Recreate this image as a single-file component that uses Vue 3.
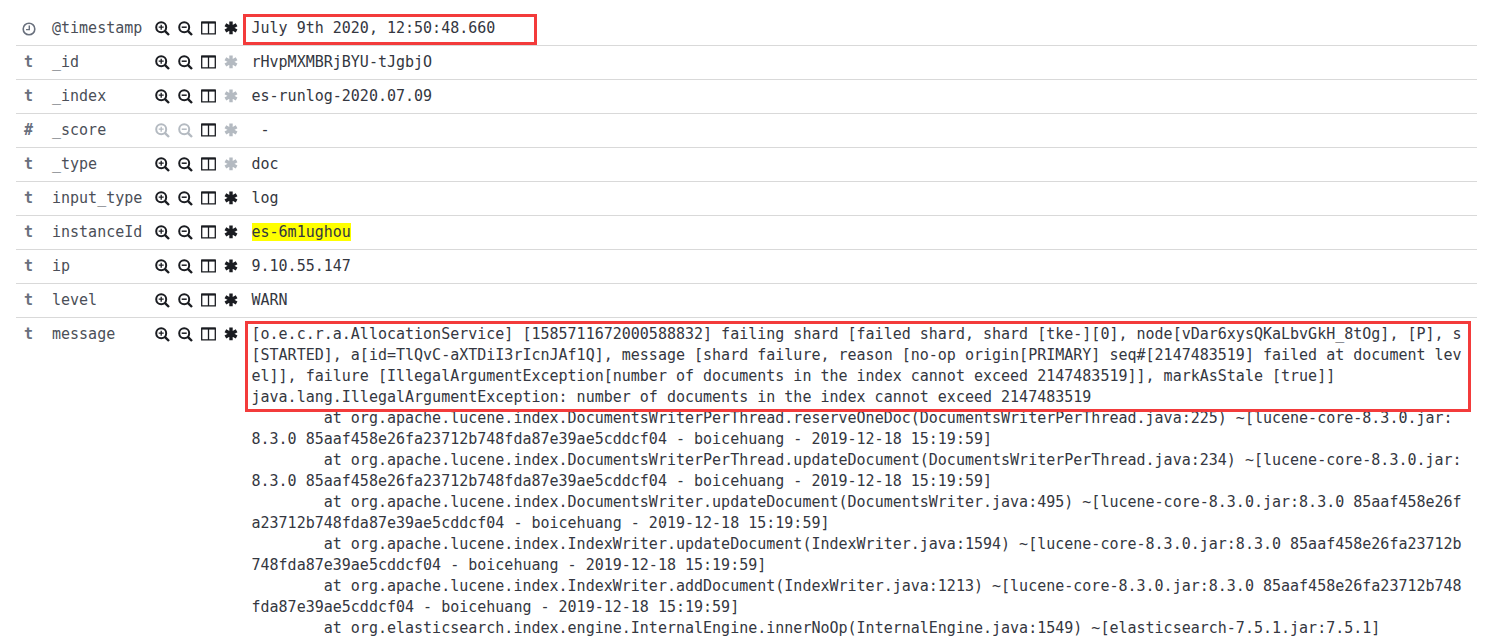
<script setup>
const rows = [
  { type: 'clock', name: '@timestamp', value: 'July 9th 2020, 12:50:48.660', star: true },
  { type: 't', name: '_id', value: 'rHvpMXMBRjBYU-tJgbjO' },
  { type: 't', name: '_index', value: 'es-runlog-2020.07.09' },
  { type: '#', name: '_score', value: ' -', noFilter: true },
  { type: 't', name: '_type', value: 'doc' },
  { type: 't', name: 'input_type', value: 'log', star: true },
  { type: 't', name: 'instanceId', mark: 'es-6m1ughou', star: true },
  { type: 't', name: 'ip', value: '9.10.55.147', star: true },
  { type: 't', name: 'level', value: 'WARN', star: true },
]
const message = `[o.e.c.r.a.AllocationService] [1585711672000588832] failing shard [failed shard, shard [tke-][0], node[vDar6xysQKaLbvGkH_8tOg], [P], s[STARTED], a[id=TlQvC-aXTDiI3rIcnJAf1Q], message [shard failure, reason [no-op origin[PRIMARY] seq#[2147483519] failed at document level]], failure [IllegalArgumentException[number of documents in the index cannot exceed 2147483519]], markAsStale [true]]
java.lang.IllegalArgumentException: number of documents in the index cannot exceed 2147483519
\tat org.apache.lucene.index.DocumentsWriterPerThread.reserveOneDoc(DocumentsWriterPerThread.java:225) ~[lucene-core-8.3.0.jar:8.3.0 85aaf458e26fa23712b748fda87e39ae5cddcf04 - boicehuang - 2019-12-18 15:19:59]
\tat org.apache.lucene.index.DocumentsWriterPerThread.updateDocument(DocumentsWriterPerThread.java:234) ~[lucene-core-8.3.0.jar:8.3.0 85aaf458e26fa23712b748fda87e39ae5cddcf04 - boicehuang - 2019-12-18 15:19:59]
\tat org.apache.lucene.index.DocumentsWriter.updateDocument(DocumentsWriter.java:495) ~[lucene-core-8.3.0.jar:8.3.0 85aaf458e26fa23712b748fda87e39ae5cddcf04 - boicehuang - 2019-12-18 15:19:59]
\tat org.apache.lucene.index.IndexWriter.updateDocument(IndexWriter.java:1594) ~[lucene-core-8.3.0.jar:8.3.0 85aaf458e26fa23712b748fda87e39ae5cddcf04 - boicehuang - 2019-12-18 15:19:59]
\tat org.apache.lucene.index.IndexWriter.addDocument(IndexWriter.java:1213) ~[lucene-core-8.3.0.jar:8.3.0 85aaf458e26fa23712b748fda87e39ae5cddcf04 - boicehuang - 2019-12-18 15:19:59]
\tat org.elasticsearch.index.engine.InternalEngine.innerNoOp(InternalEngine.java:1549) ~[elasticsearch-7.5.1.jar:7.5.1]`
</script>

<template>
  <div class="page">
    <div class="table">
      <div v-for="r in [...rows, { type: 't', name: 'message', message, star: true }]" :key="r.name" class="row" :class="{ last: r.message }">
        <div class="type">
          <svg v-if="r.type === 'clock'" width="14" height="14" viewBox="0 0 14 14" class="clock">
            <circle cx="7" cy="7" r="5.8" fill="none" stroke="#69707d" stroke-width="1.6" />
            <path d="M7.3 3.4V7.6H4" fill="none" stroke="#69707d" stroke-width="1.4" />
          </svg>
          <span v-else>{{ r.type }}</span>
        </div>
        <div class="name">{{ r.name }}</div>
        <div class="actions">
          <svg class="ic" :class="{ off: r.noFilter }" width="15" height="15" viewBox="0 0 15 15">
            <circle cx="6.2" cy="6.2" r="5" fill="none" stroke="currentColor" stroke-width="2" />
            <path d="M9.8 9.8l4.2 4.2" stroke="currentColor" stroke-width="2.4" />
            <path d="M3.7 6.2h5M6.2 3.7v5" stroke="currentColor" stroke-width="1.3" />
          </svg>
          <svg class="ic" :class="{ off: r.noFilter }" width="15" height="15" viewBox="0 0 15 15">
            <circle cx="6.2" cy="6.2" r="5" fill="none" stroke="currentColor" stroke-width="2" />
            <path d="M9.8 9.8l4.2 4.2" stroke="currentColor" stroke-width="2.4" />
            <path d="M3.7 6.2h5" stroke="currentColor" stroke-width="1.5" />
          </svg>
          <svg class="ic" width="15" height="15" viewBox="0 0 15 15">
            <path d="M.7 1.2h13.6v11.6H.7zM7.5 1.2v11.6" fill="none" stroke="currentColor" stroke-width="1.3" />
            <path d="M.7 1.6h13.6" stroke="currentColor" stroke-width="2" />
          </svg>
          <svg class="ic" :class="{ dim: !r.star }" width="15" height="15" viewBox="0 0 15 15">
            <path d="M7 .5v12.8M1.4 3.7l11.2 6.4M12.6 3.7L1.4 10.1" stroke="currentColor" stroke-width="3.4" />
          </svg>
        </div>
        <div v-if="r.message" class="value message">{{ r.message }}</div>
        <div v-else class="value">
          <mark v-if="r.mark">{{ r.mark }}</mark><template v-else>{{ r.value }}</template>
        </div>
      </div>
    </div>
    <div class="callout one"></div>
    <div class="callout two"></div>
  </div>
</template>

<style scoped>
.page {
  position: relative;
  width: 1496px;
  height: 640px;
  overflow: hidden;
  background: #fff;
  padding: 12px 19px 0 16px;
  box-sizing: border-box;
  font-family: "DejaVu Sans Mono", monospace;
  font-size: 15px;
  color: #343741;
}
.row {
  display: flex;
  height: 34px;
  box-sizing: border-box;
  border-bottom: 1px solid #d9d9d9;
}
.row.last {
  height: auto;
  border-bottom: 0;
}
.type {
  width: 36px;
  padding: 6px 0 0 8px;
  font-weight: bold;
  color: #69707d;
  line-height: 21px;
  flex: none;
  box-sizing: border-box;
}
.clock {
  display: block;
  margin-top: 4px;
  margin-left: -2px;
}
.name {
  width: 103px;
  flex: none;
  padding-top: 6px;
  line-height: 21px;
  color: #4b4f58;
}
.actions {
  width: 96.5px;
  flex: none;
  display: flex;
  gap: 8px;
  padding-top: 9px;
  align-items: flex-start;
  color: #1a1c21;
}
.ic {
  flex: none;
}
.ic.off,
.ic.dim {
  color: #b4bac1;
}
.value {
  flex: 1;
  padding-top: 6px;
  line-height: 21px;
  white-space: pre-wrap;
  word-break: break-all;
  color: #343741;
  tab-size: 8;
}
.message {
  padding-right: 11.5px;
}
mark {
  background: #ffff00;
  color: #343741;
}
.callout {
  position: absolute;
  border: 3px solid #f33b3b;
  box-sizing: border-box;
}
.one {
  left: 243px;
  top: 14px;
  width: 294px;
  height: 31px;
}
.two {
  left: 245px;
  top: 321px;
  width: 1226px;
  height: 91px;
}
</style>
